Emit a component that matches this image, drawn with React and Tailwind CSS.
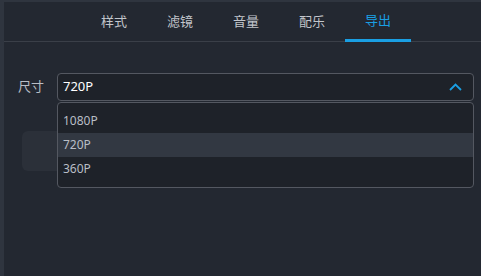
import { useState } from "react";

const TABS = ["样式", "滤镜", "音量", "配乐", "导出"];
const SIZES = ["1080P", "720P", "360P"];

/* ========== CHEVRON ========== */
const ChevronUp = () => (
  <svg width="13" height="8" viewBox="0 0 13 8" fill="none">
    <path d="M1 7L6.5 1.5L12 7" stroke="#1a9fe3" strokeWidth="1.8" />
  </svg>
);

/* ========== MAIN ========== */
export default function App() {
  const [active] = useState(4);
  const [size] = useState("720P");

  return (
    <div
      className="w-[481px] h-[276px] flex bg-[#232831] border-t-2 border-[#2f353f] overflow-hidden"
      style={{ fontFamily: '"Noto Sans", "Noto Sans CJK SC", sans-serif' }}
    >
      {/* left strip */}
      <div className="w-1 h-full bg-[#2f353f]" />

      <div className="flex-1 flex flex-col">
        {/* ================= TABS ================= */}
        <div className="h-[40px] flex pl-[77px] border-b border-[#3a3f48]">
          {TABS.map((t, i) => (
            <div
              key={t}
              className={`w-[66px] flex items-center justify-center text-[13px] pt-[1px] ${
                i === active
                  ? "text-[#1a9fe3] border-b-[3px] border-[#1a9fe3] -mb-[1px]"
                  : "text-[#c2c6cc]"
              }`}
            >
              {t}
            </div>
          ))}
        </div>

        {/* ================= FORM ================= */}
        <div className="pl-[14px] pr-[7px] pt-[31px]">
          <div className="flex items-center">
            <span className="w-[39px] text-[13px] text-[#b9bec6]">尺寸</span>
            <div className="relative flex-1">
              <div className="h-[28px] flex items-center justify-between pl-[5px] pr-[11px] bg-[#1e2229] border border-[#545861] rounded-[4px]">
                <span className="text-[13px] text-white">{size}</span>
                <ChevronUp />
              </div>

              {/* dropdown list */}
              <div className="absolute z-10 left-0 right-0 top-[29px] py-[6px] bg-[#1e2229] border border-[#545861] rounded-[4px]">
                {SIZES.map((s) => (
                  <div
                    key={s}
                    className={`h-[24px] flex items-center pl-[5px] text-[12px] ${
                      s === size ? "bg-[#323842] text-[#b9bec6]" : "text-[#b9bec6]"
                    }`}
                  >
                    {s}
                  </div>
                ))}
              </div>
            </div>
          </div>

          {/* button behind dropdown */}
          <div className="mt-[30px] ml-[4px] h-[40px] rounded-[6px] bg-[#2b3039]" />
        </div>
      </div>
    </div>
  );
}
